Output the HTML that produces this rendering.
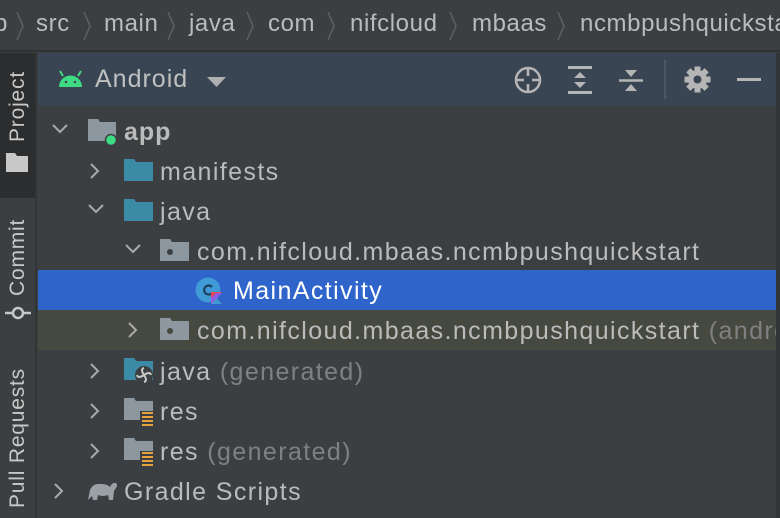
<!DOCTYPE html>
<html><head><meta charset="utf-8"><style>
*{margin:0;padding:0;box-sizing:border-box}
body{width:780px;height:518px;overflow:hidden;background:#3c3f41;font-family:"Liberation Sans",sans-serif;color:#bbbbbb;position:relative}
.bc{position:absolute;left:0;top:0;width:780px;height:52px;background:#3c3f41;border-bottom:2px solid #2f3133;font-size:24px;letter-spacing:0.6px;white-space:nowrap}
.bc span{position:absolute;top:10px}
.sep{position:absolute;top:9px}
.strip{position:absolute;left:0;top:53px;width:37px;height:465px;background:#3c3f41;border-right:2px solid #323436}
.ptab{position:absolute;left:0;top:0;width:35px;height:145px;background:#2b2d2f}
.vt{position:absolute;transform:rotate(-90deg);transform-origin:left top;font-size:21px;letter-spacing:0.8px;color:#c8c8c8;white-space:nowrap}
.hdr{position:absolute;left:38px;top:53px;width:738px;height:53px;background:#3a4553}
.rb{position:absolute;left:776px;top:53px;width:4px;height:465px;background:#313335}
.row{position:absolute;left:38px;width:738px;height:40px;font-size:25px;letter-spacing:1.4px;white-space:nowrap;overflow:hidden}
.row .t{position:absolute;top:7px}
.g{color:#808080}
.sel{background:#2f65ca;color:#fff}
.hl{background:#45493f}
svg{position:absolute}
</style></head><body>
<div class="bc">
<span style="left:-6px">p</span>
<svg class="sep" style="left:15px" width="10" height="34"><path d="M2 3 L8 17 L2 31" stroke="#5e6163" stroke-width="1.5" fill="none"/></svg>
<span style="left:36px">src</span>
<svg class="sep" style="left:82px" width="10" height="34"><path d="M2 3 L8 17 L2 31" stroke="#5e6163" stroke-width="1.5" fill="none"/></svg>
<span style="left:104px">main</span>
<svg class="sep" style="left:166px" width="10" height="34"><path d="M2 3 L8 17 L2 31" stroke="#5e6163" stroke-width="1.5" fill="none"/></svg>
<span style="left:189px">java</span>
<svg class="sep" style="left:245px" width="10" height="34"><path d="M2 3 L8 17 L2 31" stroke="#5e6163" stroke-width="1.5" fill="none"/></svg>
<span style="left:268px">com</span>
<svg class="sep" style="left:326px" width="10" height="34"><path d="M2 3 L8 17 L2 31" stroke="#5e6163" stroke-width="1.5" fill="none"/></svg>
<span style="left:350px">nifcloud</span>
<svg class="sep" style="left:448px" width="10" height="34"><path d="M2 3 L8 17 L2 31" stroke="#5e6163" stroke-width="1.5" fill="none"/></svg>
<span style="left:472px">mbaas</span>
<svg class="sep" style="left:556px" width="10" height="34"><path d="M2 3 L8 17 L2 31" stroke="#5e6163" stroke-width="1.5" fill="none"/></svg>
<span style="left:580px">ncmbpushquickstart</span>
</div>
<div class="strip">
<div class="ptab"></div>
<div class="vt" style="left:6px;top:89px">Project</div>
<svg style="left:6px;top:100px" width="22" height="20"><path d="M0 0H9L11 3H22V19H0Z" fill="#c8c8c8"/></svg>
<div class="vt" style="left:6px;top:243px">Commit</div>
<svg style="left:5px;top:252px" width="26" height="16"><path d="M0 8H26" stroke="#c8c8c8" stroke-width="2.5"/><circle cx="13" cy="8" r="5" fill="#3c3f41" stroke="#c8c8c8" stroke-width="2.5"/></svg>
<div class="vt" style="left:6px;top:455px">Pull Requests</div>
</div>
<div class="hdr">
<svg style="left:20px;top:17px" width="25" height="18"><path d="M1 17A11.5 11.5 0 0 1 24 17Z" fill="#3ddc84"/><path d="M5 6L2 1M20 6L23 1" stroke="#3ddc84" stroke-width="2"/><circle cx="8" cy="12" r="1.3" fill="#3a4553"/><circle cx="17" cy="12" r="1.3" fill="#3a4553"/></svg>
<div style="position:absolute;left:57px;top:12px;font-size:25px;letter-spacing:1px;color:#c0c0c0">Android</div>
<svg style="left:169px;top:24px" width="19" height="10"><path d="M0 0H19L9.5 10Z" fill="#b0b0b0"/></svg>
<svg style="left:476px;top:13px" width="28" height="28"><circle cx="14" cy="14" r="12" stroke="#b5b5b5" stroke-width="2.5" fill="none"/><path d="M14 2V10M14 18V26M2 14H10M18 14H26" stroke="#b5b5b5" stroke-width="2.5"/></svg>
<svg style="left:530px;top:13px" width="24" height="28"><path d="M0 1.5H24M0 26.5H24" stroke="#b5b5b5" stroke-width="3"/><path d="M6 12L12 6L18 12ZM6 16L12 22L18 16Z" fill="#b5b5b5"/></svg>
<svg style="left:581px;top:15px" width="24" height="25"><path d="M0 12.5H24" stroke="#b5b5b5" stroke-width="2.5"/><path d="M6 2H18L12 9ZM6 23H18L12 16Z" fill="#b5b5b5"/></svg>
<div style="position:absolute;left:626px;top:7px;width:2px;height:39px;background:#4e5864"></div>
<svg style="left:646px;top:13px" width="27" height="27" viewBox="-13.5 -13.5 27 27"><g fill="#b5b5b5"><circle r="9.5"/><rect x="-3" y="-13" width="6" height="26"/><rect x="-3" y="-13" width="6" height="26" transform="rotate(45)"/><rect x="-3" y="-13" width="6" height="26" transform="rotate(90)"/><rect x="-3" y="-13" width="6" height="26" transform="rotate(135)"/></g><circle r="4" fill="#3a4553"/></svg>
<div style="position:absolute;left:699px;top:25px;width:24px;height:3px;background:#b5b5b5"></div>
</div>
<div class="rb"></div>

<div class="row" style="top:111px">
<svg style="left:14px;top:13px" width="16" height="10"><path d="M1 1L8 8L15 1" stroke="#aaa" stroke-width="2" fill="none"/></svg>
<svg style="left:50px;top:8px" width="30" height="26"><path d="M0 0H10L12 3H28V22H0Z" fill="#8d979f"/><circle cx="23" cy="21" r="5.5" fill="#3ddc84" stroke="#3c3f41" stroke-width="1.5"/></svg>
<span class="t" style="left:86px;font-weight:bold;letter-spacing:1px">app</span></div>
<div class="row" style="top:151px">
<svg style="left:52px;top:12px" width="10" height="16"><path d="M1 1L8 8L1 15" stroke="#aaa" stroke-width="2" fill="none"/></svg>
<svg style="left:86px;top:8px" width="29" height="23"><path d="M0 0H10L12 3H29V22H0Z" fill="#3b8aa6"/></svg>
<span class="t" style="left:122px">manifests</span></div>
<div class="row" style="top:191px">
<svg style="left:50px;top:13px" width="16" height="10"><path d="M1 1L8 8L15 1" stroke="#aaa" stroke-width="2" fill="none"/></svg>
<svg style="left:86px;top:8px" width="29" height="23"><path d="M0 0H10L12 3H29V22H0Z" fill="#3b8aa6"/></svg>
<span class="t" style="left:122px">java</span></div>
<div class="row" style="top:231px">
<svg style="left:87px;top:13px" width="16" height="10"><path d="M1 1L8 8L15 1" stroke="#aaa" stroke-width="2" fill="none"/></svg>
<svg style="left:122px;top:8px" width="29" height="23"><path d="M0 0H10L12 3H29V22H0Z" fill="#8d979f"/><circle cx="10" cy="13" r="3" fill="#3c3f41"/></svg>
<span class="t" style="left:159px">com.nifcloud.mbaas.ncmbpushquickstart</span></div>
<div class="row sel" style="top:270px">
<svg style="left:157px;top:7px" width="32" height="28"><circle cx="13" cy="13" r="12.5" fill="#3f9ad6"/><path d="M17 10A4.5 4.5 0 1 0 17 16" stroke="#1d3f5c" stroke-width="2.2" fill="none"/><path d="M16 15H27L21 21L27 27H16Z" fill="#e44857"/><path d="M16 21L21 16H27L16 27Z" fill="#8a5cf5" opacity=".9"/><path d="M16 27L21.5 21.5L27 27Z" fill="#3f9ad6"/></svg>
<span class="t" style="left:195px">MainActivity</span></div>
<div class="row hl" style="top:310px">
<svg style="left:90px;top:12px" width="10" height="16"><path d="M1 1L8 8L1 15" stroke="#aaa" stroke-width="2" fill="none"/></svg>
<svg style="left:122px;top:8px" width="29" height="23"><path d="M0 0H10L12 3H29V22H0Z" fill="#8d979f"/><circle cx="10" cy="13" r="3" fill="#45493f"/></svg>
<span class="t" style="left:159px">com.nifcloud.mbaas.ncmbpushquickstart <span class="g">(androidTest)</span></span></div>
<div class="row" style="top:351px">
<svg style="left:52px;top:12px" width="10" height="16"><path d="M1 1L8 8L1 15" stroke="#aaa" stroke-width="2" fill="none"/></svg>
<svg style="left:86px;top:7px" width="32" height="26"><path d="M0 0H10L12 3H29V22H0Z" fill="#3b8aa6"/><circle cx="20" cy="17" r="9" fill="#3c3f41"/><g stroke="#c8c8c8" stroke-width="2" fill="none"><path d="M20 17Q16 11 20 10M20 17Q26 13 27 17M20 17Q24 23 20 24M20 17Q14 21 13 17"/></g></svg>
<span class="t" style="left:122px">java <span class="g">(generated)</span></span></div>
<div class="row" style="top:391px">
<svg style="left:52px;top:12px" width="10" height="16"><path d="M1 1L8 8L1 15" stroke="#aaa" stroke-width="2" fill="none"/></svg>
<svg style="left:86px;top:7px" width="30" height="28"><path d="M0 0H10L12 3H29V22H0Z" fill="#8d979f"/><rect x="16" y="13" width="14" height="15" fill="#3c3f41"/><path d="M18 15H29M18 19H29M18 23H29M18 27H29" stroke="#e8a33d" stroke-width="2"/></svg>
<span class="t" style="left:122px">res</span></div>
<div class="row" style="top:431px">
<svg style="left:52px;top:12px" width="10" height="16"><path d="M1 1L8 8L1 15" stroke="#aaa" stroke-width="2" fill="none"/></svg>
<svg style="left:86px;top:7px" width="30" height="28"><path d="M0 0H10L12 3H29V22H0Z" fill="#8d979f"/><rect x="16" y="13" width="14" height="15" fill="#3c3f41"/><path d="M18 15H29M18 19H29M18 23H29M18 27H29" stroke="#e8a33d" stroke-width="2"/></svg>
<span class="t" style="left:122px">res <span class="g">(generated)</span></span></div>
<div class="row" style="top:471px">
<svg style="left:16px;top:12px" width="10" height="16"><path d="M1 1L8 8L1 15" stroke="#aaa" stroke-width="2" fill="none"/></svg>
<svg style="left:49px;top:7px" width="32" height="24"><path d="M1 22L3 12Q6 5 14 6Q20 6 23 9Q25 4 29 5Q31 7 29 10L27 13L26 22H22L21 17Q16 19 11 17L10 22H6L5 18Z" fill="#9aa0a6"/></svg>
<span class="t" style="left:86px">Gradle Scripts</span></div>
</body></html>
